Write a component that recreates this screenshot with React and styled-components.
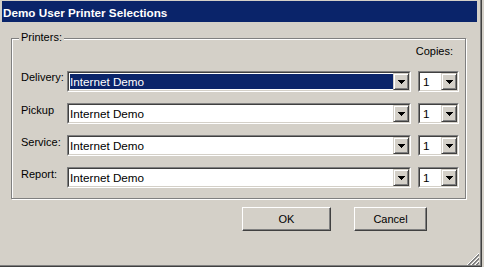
import React from "react";
import styled, { createGlobalStyle } from "styled-components";

const Global = createGlobalStyle`
  html, body { margin: 0; padding: 0; background: #d4d0c8; }
  body { font-family: "Liberation Sans", Arial, sans-serif; font-size: 11px; color: #000; }
`;

const Window = styled.div`
  box-sizing: border-box;
  width: 482px;
  height: 267px;
  padding: 1px 4px 0 2px;
  background: #d4d0c8;
  border-right: 1px solid #404040;
  border-bottom: 1px solid #404040;
  box-shadow: inset -1px -1px 0 #808080;
  display: flex;
  flex-direction: column;
`;

const TitleBar = styled.div`
  height: 21px;
  background: #0a246a;
  color: #fff;
  font-weight: bold;
  font-size: 11.7px;
  line-height: 21px;
  padding: 1px 0 0 1px;
  box-sizing: border-box;
  white-space: nowrap;
`;

const Group = styled.div`
  position: relative;
  box-sizing: border-box;
  width: 455px;
  height: 161px;
  margin: 16px 0 0 9px;
  padding: 6px 6px 10px 9px;
  border: 1px solid #808080;
  box-shadow: inset 1px 1px 0 #fff, 1px 1px 0 #fff;
  display: flex;
  flex-direction: column;
`;

const Legend = styled.span`
  position: absolute;
  top: -8px;
  left: 7px;
  padding: 0 2px;
  background: #d4d0c8;
  line-height: 13px;
`;

const CopiesHeader = styled.div`
  line-height: 13px;
  height: 13px;
  text-align: right;
  padding-right: 6px;
  margin-bottom: 13px;
`;

const Rows = styled.div`
  display: flex;
  flex-direction: column;
  gap: 11px;
`;

const Row = styled.div`
  display: flex;
  align-items: flex-start;
  gap: 7px;
`;

const Label = styled.div`
  width: 46px;
  margin-right: -7px;
  line-height: 13px;
  padding-top: ${(p) => p.$dy}px;
  white-space: nowrap;
`;

const ComboOuter = styled.div`
  box-sizing: border-box;
  width: ${(p) => p.$w}px;
  height: 21px;
  border: 1px solid;
  border-color: #808080 #fff #fff #808080;
  display: flex;
`;

const ComboInner = styled.div`
  flex: 1;
  display: flex;
  border: 1px solid;
  border-color: #404040 #d4d0c8 #d4d0c8 #404040;
  background: #fff;
`;

const Field = styled.div`
  flex: 1;
  display: flex;
  padding: 1px 0 1px 1px;
`;

const FieldText = styled.div`
  flex: 1;
  font-size: 11.7px;
  line-height: 15px;
  padding-left: ${(p) => p.$pl}px;
  background: ${(p) => (p.$selected ? "#0a246a" : "transparent")};
  color: ${(p) => (p.$selected ? "#fff" : "#000")};
  white-space: nowrap;
  overflow: hidden;
`;

const DropButton = styled.div`
  box-sizing: border-box;
  width: 16px;
  height: 17px;
  background: #d4d0c8;
  border: 1px solid;
  border-color: #d4d0c8 #404040 #404040 #d4d0c8;
  box-shadow: inset 1px 1px 0 #fff, inset -1px -1px 0 #808080;
  display: flex;
  align-items: center;
  justify-content: center;
`;

const ButtonRow = styled.div`
  display: flex;
  gap: 23px;
  margin: 8px 0 0 240px;
`;

const Button = styled.button`
  box-sizing: border-box;
  width: ${(p) => p.$w}px;
  height: 24px;
  padding: 0;
  background: #d4d0c8;
  font-family: "Liberation Sans", Arial, sans-serif;
  font-size: 11px;
  color: #000;
  border: 1px solid;
  border-color: #fff #404040 #404040 #fff;
  box-shadow: inset -1px -1px 0 #808080;
  border-radius: 0;
`;

const GripRow = styled.div`
  margin-top: auto;
  margin-right: -2px;
  margin-bottom: 1px;
  display: flex;
  justify-content: flex-end;
`;

const Arrow = () => (
  <svg width="7" height="4" viewBox="0 0 7 4" shapeRendering="crispEdges">
    <rect x="0" y="0" width="7" height="1" fill="#000" />
    <rect x="1" y="1" width="5" height="1" fill="#000" />
    <rect x="2" y="2" width="3" height="1" fill="#000" />
    <rect x="3" y="3" width="1" height="1" fill="#000" />
  </svg>
);

const Grip = () => {
  const px = [];
  const colors = ["#fff", "#808080", "#808080"];
  [0, 4, 8].forEach((k) => {
    colors.forEach((c, j) => {
      const d = k + j;
      for (let i = 0; i <= 11 - d; i++) {
        px.push(<rect key={`${d}-${i}`} x={d + i} y={11 - i} width="1" height="1" fill={c} />);
      }
    });
  });
  return (
    <svg width="12" height="12" viewBox="0 0 12 12" shapeRendering="crispEdges">
      {px}
    </svg>
  );
};

const Combo = ({ width, text, selected, pl = 0 }) => (
  <ComboOuter $w={width}>
    <ComboInner>
      <Field>
        <FieldText $selected={selected} $pl={pl}>{text}</FieldText>
      </Field>
      <DropButton>
        <Arrow />
      </DropButton>
    </ComboInner>
  </ComboOuter>
);

const rows = [
  { label: "Delivery:", selected: true, dy: 0 },
  { label: "Pickup", selected: false, dy: 1 },
  { label: "Service:", selected: false, dy: 1 },
  { label: "Report:", selected: false, dy: 1 },
];

export default function App() {
  return (
    <>
      <Global />
      <Window>
        <TitleBar>Demo User Printer Selections</TitleBar>
        <Group>
          <Legend>Printers:</Legend>
          <CopiesHeader>Copies:</CopiesHeader>
          <Rows>
            {rows.map((r) => (
              <Row key={r.label}>
                <Label $dy={r.dy}>{r.label}</Label>
                <Combo width={344} text="Internet Demo" selected={r.selected} />
                <Combo width={41} text="1" pl={2} />
              </Row>
            ))}
          </Rows>
        </Group>
        <ButtonRow>
          <Button $w={89}>OK</Button>
          <Button $w={73}>Cancel</Button>
        </ButtonRow>
        <GripRow>
          <Grip />
        </GripRow>
      </Window>
    </>
  );
}
